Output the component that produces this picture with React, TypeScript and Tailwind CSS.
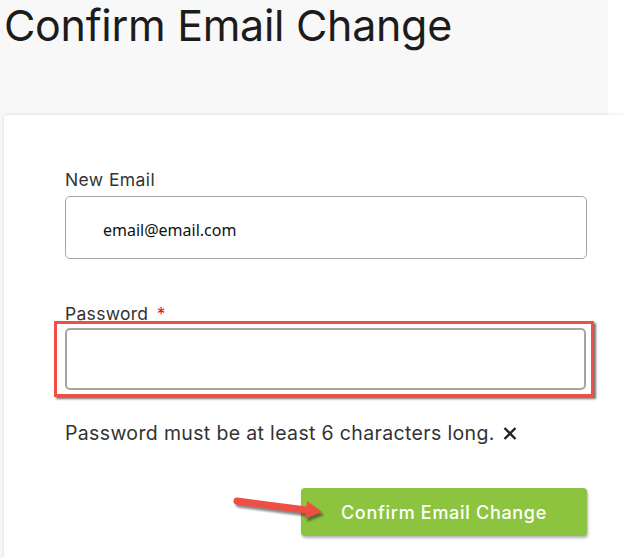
import React from "react";

function Arrow() {
  return (
    <svg
      className="absolute left-[228px] top-[489px]"
      width="104"
      height="38"
      viewBox="0 0 104 38"
    >
      <defs>
        <filter id="sh" x="-20%" y="-50%" width="140%" height="200%">
          <feGaussianBlur stdDeviation="1.2" />
        </filter>
      </defs>
      <g transform="translate(2,3)" opacity="0.55" filter="url(#sh)">
        <line x1="9" y1="12" x2="80" y2="21.2" stroke="#222" strokeWidth="7" strokeLinecap="round" />
        <polygon points="94,23 77.1,29.8 79.1,12" fill="#222" />
      </g>
      <line x1="9" y1="12" x2="80" y2="21.2" stroke="#ef4f43" strokeWidth="7" strokeLinecap="round" />
      <polygon points="94,23 77.1,29.8 79.1,12" fill="#ef4f43" />
    </svg>
  );
}

const F = { fontFamily: "Inter, Lato, 'Open Sans', sans-serif" };

export default function App() {
  return (
    <div className="relative w-[624px] h-[558px] overflow-hidden bg-white">
      <div className="w-[608px] h-full bg-[#f8f8f8] flex flex-col">
        <h1
          className="pl-[4px] pt-0 h-[115px] text-[43px] leading-[50px] text-[#1c1c1c] font-normal tracking-[-0.3px]"
          style={F}
        >
          Confirm Email Change
        </h1>
        <div
          className="ml-[4px] w-[620px] flex-1 bg-white rounded-tl-[3px] shadow-[0_0_4px_rgba(0,0,0,0.12)] pl-[61px] pr-[37px] pt-[53px]"
          style={F}
        >
          <div className="text-[17.5px] leading-[24px] text-[#333] tracking-[0.4px]">New Email</div>
          <div className="mt-[4px] h-[63px] w-[522px] border-[1.5px] border-[#a5a5a5] rounded-[5px] flex items-center pl-[37px] pt-[5px]">
            <span
              className="text-[16px] text-[#111]"
              style={{ fontFamily: "'Noto Sans', 'Open Sans', sans-serif" }}
            >
              email@email.com
            </span>
          </div>
          <div className="mt-[43px] text-[17.5px] leading-[24px] text-[#333] tracking-[0.3px]">
            Password <span className="ml-[3px] text-[#e02020]">*</span>
          </div>
          <div className="-ml-[11px] -mt-[5px] w-[540px] h-[76px] border-[3px] border-[#f14f46] shadow-[2px_2px_2px_rgba(0,0,0,0.55)] pl-[8px] pt-[4px]">
            <div className="h-[62px] w-[521px] border-[2px] border-[#a5a5a5] rounded-[5px] bg-white" />
          </div>
          <div className="mt-[23px] text-[19.5px] leading-[26px] text-[#333] tracking-[0.35px] flex items-center gap-[8px]">
            <span>Password must be at least 6 characters long.</span>
            <svg width="14" height="13" viewBox="0 0 14 13">
              <path d="M1.5 1 L12.5 12 M12.5 1 L1.5 12" stroke="#222" strokeWidth="2.4" strokeLinecap="butt" />
            </svg>
          </div>
          <div className="mt-[42px] flex justify-end w-[522px]">
            <button className="w-[286px] h-[48px] bg-[#8dc43f] rounded-[4px] shadow-[1px_2px_3px_rgba(0,0,0,0.3)] text-white text-[18px] font-medium tracking-[0.7px]">
              Confirm Email Change
            </button>
          </div>
        </div>
      </div>
      <Arrow />
    </div>
  );
}
